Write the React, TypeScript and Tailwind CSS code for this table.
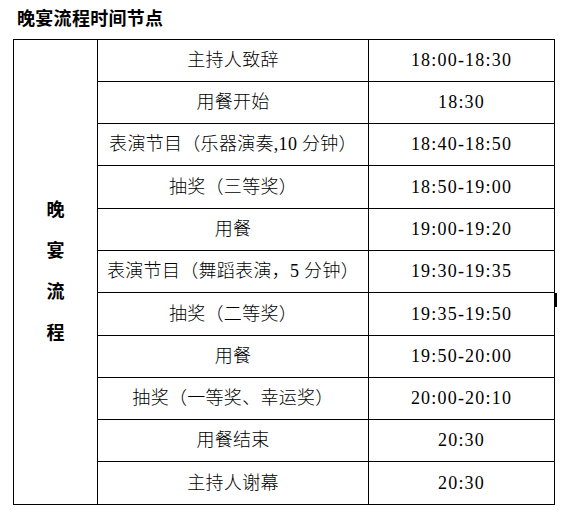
const rows = [
  { item: "主持人致辞", time: "18:00-18:30", h: "h-[42px]" },
  { item: "用餐开始", time: "18:30", h: "h-[42px]" },
  { item: "表演节目（乐器演奏,10 分钟）", time: "18:40-18:50", h: "h-[42px]" },
  { item: "抽奖（三等奖）", time: "18:50-19:00", h: "h-[43px]" },
  { item: "用餐", time: "19:00-19:20", h: "h-[42px]" },
  { item: "表演节目（舞蹈表演，5 分钟）", time: "19:30-19:35", h: "h-[42px]" },
  { item: "抽奖（二等奖）", time: "19:35-19:50", h: "h-[43px]" },
  { item: "用餐", time: "19:50-20:00", h: "h-[42px]" },
  { item: "抽奖（一等奖、幸运奖）", time: "20:00-20:10", h: "h-[42px]" },
  { item: "用餐结束", time: "20:30", h: "h-[42px]" },
  { item: "主持人谢幕", time: "20:30", h: "h-[42px]" },
]

const font = { fontFamily: '"Liberation Serif", "Noto Sans CJK SC", serif' }

export default function App() {
  return (
    <div className="w-[574px] h-[518px] bg-white text-black" style={font}>
      <div className="pl-[17px] pt-[9px] text-[18px] leading-[20px] font-bold tracking-[0.3px]">晚宴流程时间节点</div>

      <div className="relative ml-[13px] mt-[10px] w-[542px] h-[466px] border border-black flex">
        <div className="w-[84px] border-r border-black flex flex-col items-center justify-center font-bold text-[18px] leading-[41px]">
          <span>晚</span>
          <span>宴</span>
          <span>流</span>
          <span>程</span>
        </div>

        <div className="flex-1 flex flex-col">
          {rows.map((r, i) => (
            <div
              key={i}
              className={`${i === rows.length - 1 ? "h-[42px]" : r.h + " border-b border-black"} flex text-[18px] font-light`}
            >
              <div className="w-[271px] border-r border-black flex items-center justify-center tracking-[0.3px]">{r.item}</div>
              <div className="flex-1 flex items-center justify-center tracking-[1.2px] font-normal">{r.time}</div>
            </div>
          ))}
        </div>

        {/* stray thick mark on the right border */}
        <span className="absolute -right-[3px] top-[253px] w-[3px] h-[14px] bg-black" />
      </div>
    </div>
  )
}
